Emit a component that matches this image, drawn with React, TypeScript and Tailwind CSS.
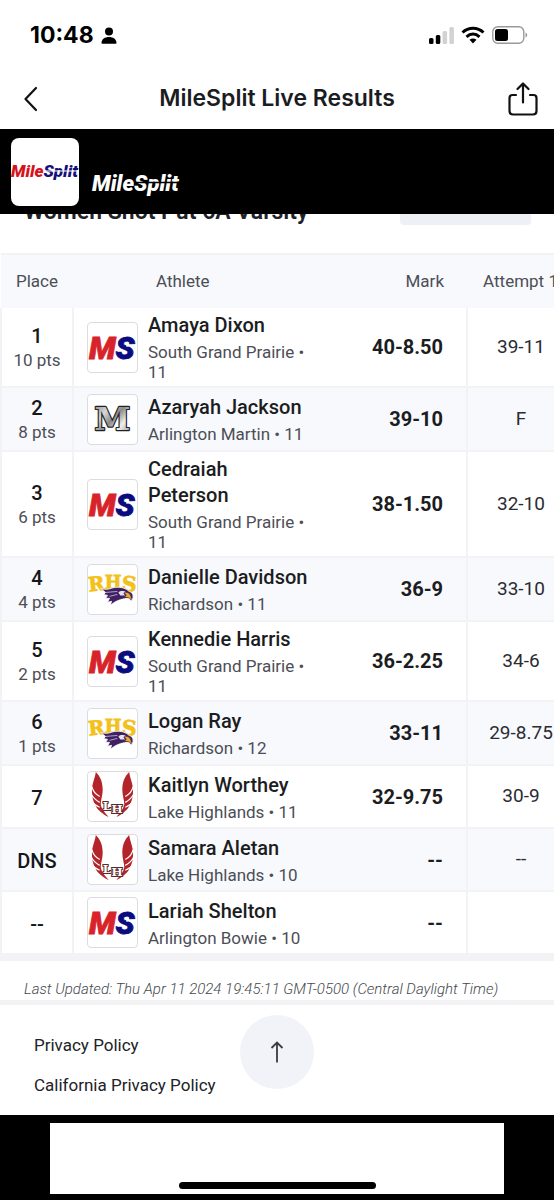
import React from 'react';

type LogoKind = 'ms' | 'martin' | 'rhs' | 'lh';

interface Result {
  place: string;
  points?: string;
  name: string;
  school: string;
  grade: string;
  logo: LogoKind;
  mark: string;
  attempt: string;
}

const results: Result[] = [
  { place: '1', points: '10 pts', name: 'Amaya Dixon', school: 'South Grand Prairie', grade: '11', logo: 'ms', mark: '40-8.50', attempt: '39-11' },
  { place: '2', points: '8 pts', name: 'Azaryah Jackson', school: 'Arlington Martin', grade: '11', logo: 'martin', mark: '39-10', attempt: 'F' },
  { place: '3', points: '6 pts', name: 'Cedraiah Peterson', school: 'South Grand Prairie', grade: '11', logo: 'ms', mark: '38-1.50', attempt: '32-10' },
  { place: '4', points: '4 pts', name: 'Danielle Davidson', school: 'Richardson', grade: '11', logo: 'rhs', mark: '36-9', attempt: '33-10' },
  { place: '5', points: '2 pts', name: 'Kennedie Harris', school: 'South Grand Prairie', grade: '11', logo: 'ms', mark: '36-2.25', attempt: '34-6' },
  { place: '6', points: '1 pts', name: 'Logan Ray', school: 'Richardson', grade: '12', logo: 'rhs', mark: '33-11', attempt: '29-8.75' },
  { place: '7', name: 'Kaitlyn Worthey', school: 'Lake Highlands', grade: '11', logo: 'lh', mark: '32-9.75', attempt: '30-9' },
  { place: 'DNS', name: 'Samara Aletan', school: 'Lake Highlands', grade: '10', logo: 'lh', mark: '--', attempt: '--' },
  { place: '--', name: 'Lariah Shelton', school: 'Arlington Bowie', grade: '10', logo: 'ms', mark: '--', attempt: '' },
];

const MileSplitMark = () => (
  <svg viewBox="0 0 50 50" className="h-full w-full" aria-hidden="true">
    <g fontFamily="Roboto, sans-serif" fontWeight="900" fontStyle="italic" fontSize="32">
      <text x="1" y="37" fill="#d8232a" stroke="#d8232a" strokeWidth="0.8">M</text>
      <text x="28" y="37" fill="#0b0b80" stroke="#0b0b80" strokeWidth="0.8">S</text>
    </g>
    <path d="M30 28.500h7M39 23.500l10-1" stroke="#fff" strokeWidth="1.600" />
  </svg>
);

const MartinLogo = () => (
  <svg viewBox="0 0 50 50" className="h-full w-full" aria-hidden="true">
    <defs>
      <linearGradient id="silver" x1="0" y1="0" x2="1" y2="1">
        <stop offset="0" stopColor="#777" />
        <stop offset="0.3" stopColor="#d8d8d8" />
        <stop offset="0.5" stopColor="#8a8a8a" />
        <stop offset="0.7" stopColor="#f0f0f0" />
        <stop offset="1" stopColor="#777" />
      </linearGradient>
    </defs>
    <text
      x="25"
      y="36"
      textAnchor="middle"
      fontFamily="'DejaVu Serif', serif"
      fontWeight="700"
      fontSize="33"
      fill="url(#silver)"
      stroke="#222"
      strokeWidth="2.400"
      strokeLinejoin="round"
      paintOrder="stroke"
    >
      M
    </text>
  </svg>
);

const RichardsonLogo = () => (
  <svg viewBox="0 0 50 50" className="h-full w-full" aria-hidden="true">
    <g fontFamily="'DejaVu Serif', serif" fontWeight="700" fill="#f3c11b" stroke="#f3c11b" strokeWidth="0.8">
      <text x="1" y="27" fontSize="20" transform="rotate(-6 1 27)">R</text>
      <text x="17" y="24" fontSize="18">H</text>
      <text x="34" y="26" fontSize="21" transform="rotate(5 34 26)">S</text>
    </g>
    <path d="M13 24c6 2 9 0 14-1 7-1 12 1 15 4 4 1 5 5 3 9-1-3-3-3-6-2-5 1-10 2-16 7l1-4-4 1 2-4-4 0 2-3-4-1 2-2z" fill="#3f2163" stroke="#fff" strokeWidth="0.8" />
    <path d="M18 28l12-1M22 32l8-2" stroke="#cfc4dc" strokeWidth="0.8" />
    <path d="M31 28c2-2 6-2 8 0l-3 1 2 2-5 0z" fill="#e8e3ee" />
    <path d="M37 28c4-1 8 2 7 8-1-3-4-3-7-3l2-2z" fill="#f2ad21" stroke="#3f2163" strokeWidth="0.7" />
  </svg>
);

const Wing = () => (
  <g>
    <path d="M8 0c5 5 7 11 7 18 0 6-2 10-2 15 1 6 5 9 8 13-6-3-11-7-13-11-3-5-4-10-4-16 0-7 3-12 4-19z" fill="#b3252b" />
    <path d="M4 15c1 5 4 8 8 10M3 22c2 4 5 7 9 9M4 30c2 3 5 5 8 6" fill="none" stroke="#fff" strokeWidth="1.200" />
  </g>
);

const LakeHighlandsLogo = () => (
  <svg viewBox="0 0 50 50" className="h-full w-full" aria-hidden="true">
    <Wing />
    <g transform="matrix(-1 0 0 1 50 0)">
      <Wing />
    </g>
    <g
      fontFamily="'DejaVu Serif', serif"
      fontWeight="700"
      fontSize="12"
      fill="#fff"
      stroke="#5a2a2a"
      strokeWidth="2"
      paintOrder="stroke"
    >
      <text x="15" y="39">L</text>
      <text x="24" y="42">H</text>
    </g>
  </svg>
);

const logos: Record<LogoKind, React.FC> = {
  ms: MileSplitMark,
  martin: MartinLogo,
  rhs: RichardsonLogo,
  lh: LakeHighlandsLogo,
};

const StatusBar = () => (
  <div className="flex h-[70px] items-center justify-between pr-[26px] pl-[30px]">
    <div className="flex items-center gap-[7px] font-[Inter,sans-serif] text-[23px] font-bold text-black">
      <span>10:48</span>
      <svg viewBox="0 0 16 17" className="h-[17px] w-4" fill="#000" aria-hidden="true">
        <circle cx="8" cy="4.500" r="4" />
        <path d="M0.500 16c0-4 3.500-6 7.500-6s7.500 2 7.500 6c0 .5-.3.700-.8.700H1.300c-.5 0-.8-.2-.8-.7z" />
      </svg>
    </div>
    <div className="flex items-center gap-[7px]">
      <svg viewBox="0 0 25 17" className="h-[17px] w-[25px]" aria-hidden="true">
        <rect x="0" y="11" width="4.500" height="6" rx="1.500" />
        <rect x="6.800" y="8" width="4.500" height="9" rx="1.500" />
        <rect x="13.600" y="4" width="4.500" height="13" rx="1.500" fill="#d2d2d2" />
        <rect x="20.400" y="0" width="4.500" height="17" rx="1.500" fill="#d2d2d2" />
      </svg>
      <svg viewBox="0 0 24 18" className="h-[18px] w-6" fill="none" stroke="#000" strokeWidth="3" aria-hidden="true">
        <path d="M1.500 6.500c6-5.600 15-5.600 21 0M5.500 10.800c4-3.600 9-3.600 13 0" />
        <path d="M8.500 13.800c2-1.800 5-1.800 7 0L12 17.500z" fill="#000" stroke="none" />
      </svg>
      <svg viewBox="0 0 36 18" className="h-[18px] w-9" aria-hidden="true">
        <rect x="0.800" y="0.800" width="31" height="16.400" rx="5" fill="none" stroke="#9a9a9a" strokeWidth="1.400" />
        <rect x="3" y="3" width="13" height="12" rx="2.500" />
        <path d="M33.500 6.500c2.300.8 2.300 4.200 0 5z" fill="#9a9a9a" />
      </svg>
    </div>
  </div>
);

const NavBar = () => (
  <div className="grid h-[59px] grid-cols-[56px_1fr_56px] items-center pb-[2px]">
    <button type="button" aria-label="Back" className="flex h-12 items-center pl-[23px]">
      <svg viewBox="0 0 16 26" className="h-[26px] w-4" fill="none" stroke="#111" strokeWidth="2.200" strokeLinecap="round" strokeLinejoin="round">
        <path d="M13 2L2.500 13 13 24" />
      </svg>
    </button>
    <h1 className="text-center font-[Inter,sans-serif] text-[23px] font-semibold text-[#1b1c1f]">
      MileSplit Live Results
    </h1>
    <button type="button" aria-label="Share" className="flex h-12 items-center pl-[10px]">
      <svg viewBox="0 0 30 34" className="h-[34px] w-[30px]" fill="none" stroke="#111" strokeWidth="2.200" strokeLinecap="round" strokeLinejoin="round">
        <path d="M8 13H4.500C2.500 13 1.500 14 1.500 16v13c0 2 1 3.500 3.500 3.500h20c2.500 0 3.500-1.500 3.500-3.500V16c0-2-1-3-3-3H22" />
        <path d="M15 20.500V2M9.500 7L15 1.500 20.500 7" />
      </svg>
    </button>
  </div>
);

const BrandBar = () => (
  <div className="relative z-10 flex h-[85px] gap-3 bg-black px-[11px] pt-[9px]">
    <div className="h-[68px] w-[68px] rounded-lg bg-white">
      <svg viewBox="0 0 68 68" className="h-full w-full" role="img" aria-label="MileSplit">
        <text x="0" y="39" fontFamily="Roboto, sans-serif" fontWeight="900" fontStyle="italic" fontSize="17">
          <tspan fill="#d8121c">Mile</tspan>
          <tspan fill="#14107a">Split</tspan>
        </text>
        <path d="M34 33h34" stroke="#fff" strokeWidth="1" />
      </svg>
    </div>
    <svg viewBox="0 0 92 30" className="mt-[30px] h-[30px] w-[92px]" role="img" aria-label="MileSplit">
      <text x="1" y="23" fontFamily="Roboto, sans-serif" fontWeight="900" fontStyle="italic" fontSize="22" fill="#fff">
        MileSplit
      </text>
      <path d="M45 14.500h47" stroke="#000" strokeWidth="1.300" />
    </svg>
  </div>
);

const ResultRow = ({ result }: { result: Result }) => {
  const Logo = logos[result.logo];

  return (
    <tr className={`border-b-2 border-[#f3f3f5] even:bg-[#f8f9fd] ${result.points ? 'h-16' : 'h-[63px]'}`}>
      <td className="border-x-2 border-[#f3f3f5] pt-[2px] text-center">
        <div className="text-[20px] leading-6 font-medium text-[#15171b]">{result.place}</div>
        {result.points && <div className="text-[17px] leading-6 text-[#4c4e56]">{result.points}</div>}
      </td>
      <td className="py-1 pl-[13px]">
        <div className="flex items-center gap-[10px]">
          <div className="h-[51px] w-[51px] shrink-0 overflow-hidden rounded border border-[#dcdcdf] bg-white">
            <Logo />
          </div>
          <div className="flex w-[160px] flex-col gap-1">
            <div className="text-[20px] leading-[26px] font-medium text-[#1b1d22]">{result.name}</div>
            <div className="text-[17px] leading-5 text-[#4c4e56]">
              {result.school} • {result.grade}
            </div>
          </div>
        </div>
      </td>
      <td className="pr-[23px] text-right text-[20px] font-bold text-[#1b1d22]">{result.mark}</td>
      <td className="border-l-2 border-[#f3f3f5] text-center text-[19px] text-[#2a2c32]">{result.attempt}</td>
    </tr>
  );
};

export default function App() {
  return (
    <div className="relative overflow-hidden bg-white font-[Roboto,sans-serif]">
      <StatusBar />
      <NavBar />
      <BrandBar />

      {/* Event title, partly scrolled under the brand bar */}
      <div className="-mt-5 flex h-[59px] items-start justify-between pr-[23px] pl-6">
        <h2 className="text-[23px] leading-9 font-semibold text-[#202227]">Women Shot Put 6A Varsity</h2>
        <button type="button" aria-label="Event options" className="h-[31px] w-[131px] rounded bg-[#eff0f5]" />
      </div>

      <div className="overflow-x-auto [scrollbar-width:none]">
        <table className="w-full min-w-[574px] table-fixed border-collapse">
          <colgroup>
            <col className="w-[72px]" />
            <col />
            <col className="w-[120px]" />
            <col className="w-[107px]" />
          </colgroup>
          <thead>
            <tr className="h-[54px] border-t-2 border-[#f3f3f5] bg-[#f8f9fd] text-[17px] text-[#4c4e56]">
              <th className="font-normal">Place</th>
              <th className="pl-[83px] text-left font-normal">Athlete</th>
              <th className="pr-[23px] text-right font-normal">Mark</th>
              <th className="font-normal whitespace-nowrap">Attempt 1</th>
            </tr>
          </thead>
          <tbody>
            {results.map((result) => (
              <ResultRow key={result.name} result={result} />
            ))}
          </tbody>
        </table>
      </div>

      <div className="border-t-[6px] border-b-[5px] border-[#f3f3f5] pt-[18px] pb-px pl-6">
        <p className="text-[15px] leading-5 font-light text-[#44484e] italic">
          Last Updated: Thu Apr 11 2024 19:45:11 GMT-0500 (Central Daylight Time)
        </p>
      </div>

      <footer className="relative h-[110px] pt-7 pl-[34px]">
        <nav className="flex flex-col items-start gap-4 text-[17px] leading-6 text-[#202227]">
          <a href="#privacy">Privacy Policy</a>
          <a href="#california-privacy">California Privacy Policy</a>
        </nav>
        <button
          type="button"
          aria-label="Back to top"
          className="absolute top-[10px] left-1/2 flex h-[74px] w-[74px] -translate-x-1/2 items-center justify-center rounded-full bg-[#f2f3f9]"
        >
          <svg viewBox="0 0 14 22" className="h-[22px] w-[14px]" fill="none" stroke="#3a3c42" strokeWidth="1.800">
            <path d="M7 21.500V1.500M1.500 7L7 1.500 12.500 7" />
          </svg>
        </button>
      </footer>

      {/* Ad slot and home indicator */}
      <div className="h-[85px] bg-black px-[50px] pt-2">
        <div className="flex h-[71px] items-end justify-center bg-white pb-[5px]">
          <div className="h-[7px] w-[197px] rounded-full bg-black" />
        </div>
      </div>
    </div>
  );
}
